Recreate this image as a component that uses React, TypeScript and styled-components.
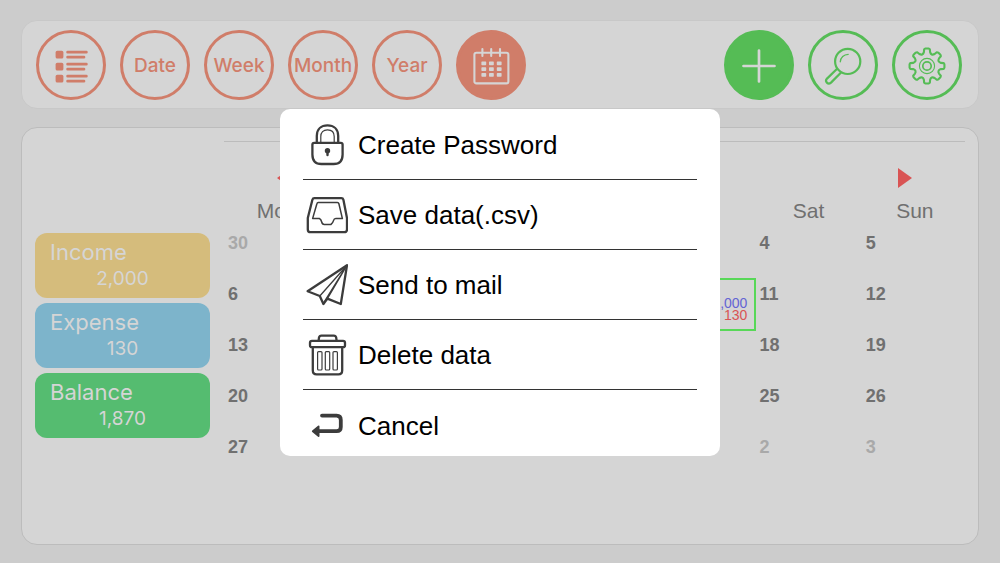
import React from "react";
import styled, { createGlobalStyle, css } from "styled-components";

const colors = {
  page: "#cccccc",
  panel: "#d5d5d5",
  line: "#bcbcbc",
  coral: "#d07d69",
  green: "#55bc55",
  red: "#d95454",
  blue: "#6464d4",
  text: "#707070",
  muted: "#a9a9a9",
  ink: "#3c3c3c",
};

const sans = `"Liberation Sans", Arial, sans-serif`;
const ui = `Inter, "Liberation Sans", sans-serif`;

const GlobalStyle = createGlobalStyle`
  *, *::before, *::after { box-sizing: border-box; }
  body { margin: 0; background: ${colors.page}; font-family: ${sans}; }
  button { font: inherit; padding: 0; border: 0; background: none; cursor: pointer; }
`;

const Page = styled.div`
  display: flex;
  flex-direction: column;
  gap: 18px;
  min-height: 100vh;
  padding: 20px 21px 18px;
`;

const panel = css`
  background: ${colors.panel};
  border: 1px solid ${colors.line};
  border-radius: 16px;
`;

const Toolbar = styled.header`
  ${panel}
  border-color: #c8c8c8;
  display: flex;
  justify-content: space-between;
  padding: 9px 16px 8px 14px;
`;

const Group = styled.nav`
  display: flex;
  gap: 14px;
`;

const RoundButton = styled.button<{ $tone: string; $filled?: boolean }>`
  display: flex;
  align-items: center;
  justify-content: center;
  width: 70px;
  height: 70px;
  padding-top: 1px;
  border: 3px solid ${(p) => p.$tone};
  border-radius: 50%;
  background: ${(p) => (p.$filled ? p.$tone : "transparent")};
  color: ${(p) => (p.$filled ? colors.panel : p.$tone)};
  font: 500 19px/24px ${ui};
  svg { flex: none; }
`;

const Board = styled.main`
  ${panel}
  flex: 1;
  display: flex;
  align-items: flex-start;
  gap: 14px;
  padding: 13px;
`;

const Summary = styled.aside`
  flex: 0 0 175px;
  display: flex;
  flex-direction: column;
  gap: 5px;
  padding-top: 92px;
`;

const Card = styled.section<{ $fill: string }>`
  height: 65px;
  padding: 5px 15px 0;
  border-radius: 12px;
  background: ${(p) => p.$fill};
  color: ${colors.panel};
  font-family: ${ui};
`;

const CardTitle = styled.h2`
  margin: 0;
  font-size: 22px;
  font-weight: 400;
  line-height: 28px;
`;

const CardAmount = styled.p`
  margin: 0;
  font-size: 19px;
  line-height: 26px;
  text-align: center;
`;

const Calendar = styled.section`
  flex: 1;
  min-width: 0;
  border-top: 1px solid ${colors.line};
`;

const MonthNav = styled.div`
  display: flex;
  justify-content: space-between;
  padding: 26px 53px 8px;
`;

const ArrowButton = styled.button`
  display: block;
  width: 14px;
  height: 20px;
  color: ${colors.red};
  svg { display: block; }
`;

const MonthTable = styled.table`
  width: calc(100% + 3px);
  table-layout: fixed;
  border-collapse: collapse;
`;

const Weekday = styled.th`
  height: 32px;
  padding: 0 0 2px;
  font-size: 21px;
  font-weight: 400;
  line-height: 24px;
  color: ${colors.text};
`;

const Day = styled.td<{ $muted?: boolean; $selected?: boolean }>`
  height: 51px;
  padding: 6px 8px 0 4px;
  vertical-align: top;
  font-size: 18px;
  font-weight: 700;
  line-height: 18px;
  color: ${(p) => (p.$muted ? colors.muted : colors.text)};
  ${(p) => p.$selected && css`
    padding-top: 0;
    outline: 2px solid #58d858;
    outline-offset: -1px;
  `}
`;

const Entry = styled.div<{ $tone: string }>`
  font-size: 14px;
  font-weight: 400;
  line-height: 12px;
  text-align: right;
  color: ${(p) => p.$tone};
`;

const Overlay = styled.div`
  position: fixed;
  inset: 0;
  display: flex;
  align-items: center;
  justify-content: center;
  padding-top: 2px;
`;

const Dialog = styled.div`
  width: 440px;
  padding: 1px 23px 0;
  border-radius: 10px;
  background: #fff;
`;

const MenuButton = styled.button`
  display: flex;
  align-items: center;
  gap: 10px;
  width: 100%;
  height: 70px;
  padding-left: 3px;
  border-bottom: 1px solid #333;
  font-size: 26px;
  line-height: 32px;
  color: #000;
  text-align: left;
  svg { flex: none; }
  &:last-child {
    height: 66px;
    padding-top: 6px;
    border-bottom: 0;
  }
`;

const Svg = ({ size, children }: { size: number; children: React.ReactNode }) => (
  <svg width={size} height={size} viewBox={`0 0 ${size} ${size}`} fill="none" stroke="currentColor"
    strokeLinecap="round" strokeLinejoin="round" aria-hidden="true">
    {children}
  </svg>
);

const ListIcon = () => (
  <Svg size={36}>
    {[3, 15, 27].map((y) => (
      <g key={y}>
        <rect x="2.6" y={y - 0.2} width="7.8" height="7.8" rx="1.6" fill="currentColor" stroke="none" />
        <path d={`M14.6 ${y + 1.2}H33.4M14.6 ${y + 6.2}H31`} strokeWidth="2.7" />
      </g>
    ))}
  </Svg>
);

const CalendarIcon = () => (
  <Svg size={38}>
    <rect x="2.4" y="5.8" width="34" height="30.6" rx="2" strokeWidth="2.1" />
    <path d="M10.4 2V9M19.2 2V9M28 2V9" strokeWidth="2.1" />
    {[14.4, 20.2, 26].map((y) =>
      [9.4, 17, 24.8].map((x) => (
        <rect key={`${x}-${y}`} x={x} y={y} width="4.8" height="3.8" rx="0.7" fill="currentColor" stroke="none" />
      ))
    )}
  </Svg>
);

const PlusIcon = () => (
  <Svg size={38}>
    <path d="M19 3.5V34.5M3.5 19H34.5" strokeWidth="2.7" />
  </Svg>
);

const SearchIcon = () => (
  <Svg size={38}>
    <circle cx="23.7" cy="14.4" r="12.6" strokeWidth="2.2" />
    <path d="M12.6 22.3L3 31.6C.4 34.4 4 38.2 7 35.6L16.8 25.8" strokeWidth="2.2" />
    <path d="M16.3 14.8C16.5 10.5 19.8 7.4 24.2 7.3" strokeWidth="1.3" />
  </Svg>
);

const at = (r: number, a: number) =>
  `${(19 + r * Math.sin(a)).toFixed(2)} ${(19 - r * Math.cos(a)).toFixed(2)}`;

const gearPath =
  Array.from({ length: 8 }, (_, i) => {
    const a = (i * Math.PI) / 4;
    return `${i ? "L" : "M"}${at(14.2, a - 0.22)}L${at(16.9, a - 0.17)}Q${at(17.4, a - 0.14)} ${at(17.5, a - 0.09)}L${at(17.5, a + 0.09)}Q${at(17.4, a + 0.14)} ${at(16.9, a + 0.17)}L${at(14.2, a + 0.22)}Q${at(11, a + Math.PI / 8)} ${at(14.2, a + Math.PI / 4 - 0.22)}`;
  }).join("") + "Z";

const GearIcon = () => (
  <Svg size={38}>
    <path d={gearPath} strokeWidth="2.1" />
    <circle cx="19" cy="19" r="7.6" strokeWidth="1.1" />
    <circle cx="19" cy="19" r="4.2" strokeWidth="1.7" />
  </Svg>
);

const MenuIcon = ({ children }: { children: React.ReactNode }) => (
  <g stroke={colors.ink} strokeWidth="2.3">{children}</g>
);

const LockIcon = () => (
  <Svg size={42}>
    <MenuIcon>
      <path d="M8.2 18.8H34.8Q36.6 18.8 36.6 20.6V30.4Q36.6 40 27.6 40H15.4Q6.4 40 6.4 30.4V20.6Q6.4 18.8 8.2 18.8Z" />
      <path d="M10.8 18.6V12C10.8 5 15.4 1.4 21.5 1.4S32.2 5 32.2 12V18.6" />
      <path d="M14.8 18.4V12.4C14.8 8.4 17.2 5.8 21.5 5.8S28.2 8.4 28.2 12.4V18.4" strokeWidth="1.2" />
      <circle cx="21.5" cy="26.8" r="2.7" fill={colors.ink} stroke="none" />
      <path d="M21.5 27.5V31" strokeWidth="2.4" />
    </MenuIcon>
  </Svg>
);

const TrayIcon = () => (
  <Svg size={42}>
    <MenuIcon>
      <path d="M8.4 4.2H35.4Q37 4.2 37.4 5.8L41 24V35.4Q41 38.2 38.2 38.2H4.6Q1.8 38.2 1.8 35.4V24L6.4 5.8Q6.8 4.2 8.4 4.2Z" />
      <path d="M12.2 8.6H31.4Q32.6 8.6 32.9 9.8L36.4 24.6H29.8Q28 24.6 27.5 26.6T25 30.4H18.2Q16.2 30.4 15.7 28T13.6 24.6H6.6L10.9 9.8Q11.2 8.6 12.2 8.6Z" strokeWidth="1.5" />
    </MenuIcon>
  </Svg>
);

const PlaneIcon = () => (
  <Svg size={42}>
    <MenuIcon>
      <path d="M41 1.2L1.6 27.2L13.8 32L17.4 40L21.4 34.6L34.8 40Z" />
      <path d="M40.6 1.8L13.8 32M40.6 1.8L17.8 38.6M40.6 1.8L21.4 34.6" strokeWidth="1.3" />
    </MenuIcon>
  </Svg>
);

const TrashIcon = () => (
  <Svg size={42}>
    <MenuIcon>
      <path d="M12.6 6.6L13 3.6Q13.4 1.6 15.4 1.6H27.8Q29.8 1.6 30.2 3.6L30.6 6.6" />
      <rect x="4" y="6.8" width="35" height="6.4" rx="2" />
      <path d="M6.8 13.4V36.6Q6.8 40.4 10.6 40.4H32.4Q36.2 40.4 36.2 36.6V13.4" />
      <g strokeWidth="1.2">
        <rect x="11.6" y="17.6" width="4.4" height="18.4" rx="1" />
        <rect x="19.3" y="17.6" width="4.4" height="18.4" rx="1" />
        <rect x="27" y="17.6" width="4.4" height="18.4" rx="1" />
      </g>
    </MenuIcon>
  </Svg>
);

const ReturnIcon = () => (
  <Svg size={42}>
    <g stroke={colors.ink} strokeWidth="3.8">
      <path d="M16 10.6H30.6Q34.8 10.6 34.8 15V22Q34.8 26.2 30.6 26.2H11" />
      <path d="M6.8 26.2L12.6 21.4V31Z" fill={colors.ink} strokeWidth="1.8" />
    </g>
  </Svg>
);

const views = ["Date", "Week", "Month", "Year"];

const totals = [
  { title: "Income", amount: "2,000", fill: "#d5bc7c" },
  { title: "Expense", amount: "130", fill: "#7db4cb" },
  { title: "Balance", amount: "1,870", fill: "#55bc70" },
];

const weekdays = ["Mon", "Tue", "Wed", "Thu", "Fri", "Sat", "Sun"];

const weeks = [
  [30, 31, 1, 2, 3, 4, 5],
  [6, 7, 8, 9, 10, 11, 12],
  [13, 14, 15, 16, 17, 18, 19],
  [20, 21, 22, 23, 24, 25, 26],
  [27, 28, 29, 30, 1, 2, 3],
];

const isOutside = (week: number, day: number) =>
  (week === 0 && day > 20) || (week === 4 && day < 10);

const menu = [
  { label: "Create Password", Icon: LockIcon },
  { label: "Save data(.csv)", Icon: TrayIcon },
  { label: "Send to mail", Icon: PlaneIcon },
  { label: "Delete data", Icon: TrashIcon },
  { label: "Cancel", Icon: ReturnIcon },
];

export default function App() {
  return (
    <>
      <GlobalStyle />
      <Page>
        <Toolbar>
          <Group aria-label="Views">
            <RoundButton $tone={colors.coral} aria-label="List"><ListIcon /></RoundButton>
            {views.map((view) => (
              <RoundButton key={view} $tone={colors.coral}>{view}</RoundButton>
            ))}
            <RoundButton $tone={colors.coral} $filled aria-label="Calendar"><CalendarIcon /></RoundButton>
          </Group>
          <Group aria-label="Actions">
            <RoundButton $tone={colors.green} $filled aria-label="Add"><PlusIcon /></RoundButton>
            <RoundButton $tone={colors.green} aria-label="Search"><SearchIcon /></RoundButton>
            <RoundButton $tone={colors.green} aria-label="Settings"><GearIcon /></RoundButton>
          </Group>
        </Toolbar>

        <Board>
          <Summary>
            {totals.map((t) => (
              <Card key={t.title} $fill={t.fill}>
                <CardTitle>{t.title}</CardTitle>
                <CardAmount>{t.amount}</CardAmount>
              </Card>
            ))}
          </Summary>
          <Calendar>
            <MonthNav>
              <ArrowButton aria-label="Previous month">
                <svg width="14" height="20" viewBox="0 0 14 20"><path d="M14 0V20L0 10Z" fill="currentColor" /></svg>
              </ArrowButton>
              <ArrowButton aria-label="Next month">
                <svg width="14" height="20" viewBox="0 0 14 20"><path d="M0 0V20L14 10Z" fill="currentColor" /></svg>
              </ArrowButton>
            </MonthNav>
            <MonthTable>
              <thead>
                <tr>{weekdays.map((d) => <Weekday key={d} scope="col">{d}</Weekday>)}</tr>
              </thead>
              <tbody>
                {weeks.map((days, w) => (
                  <tr key={w}>
                    {days.map((day) => {
                      const selected = w === 1 && day === 10;
                      return (
                        <Day key={day} $muted={isOutside(w, day)} $selected={selected}>
                          {day}
                          {selected && (
                            <>
                              <Entry $tone={colors.blue}>2,000</Entry>
                              <Entry $tone={colors.red}>130</Entry>
                            </>
                          )}
                        </Day>
                      );
                    })}
                  </tr>
                ))}
              </tbody>
            </MonthTable>
          </Calendar>
        </Board>
      </Page>

      <Overlay>
        <Dialog role="dialog" aria-modal="true" aria-label="Settings menu">
          {menu.map(({ label, Icon }) => (
            <MenuButton key={label}><Icon />{label}</MenuButton>
          ))}
        </Dialog>
      </Overlay>
    </>
  );
}
